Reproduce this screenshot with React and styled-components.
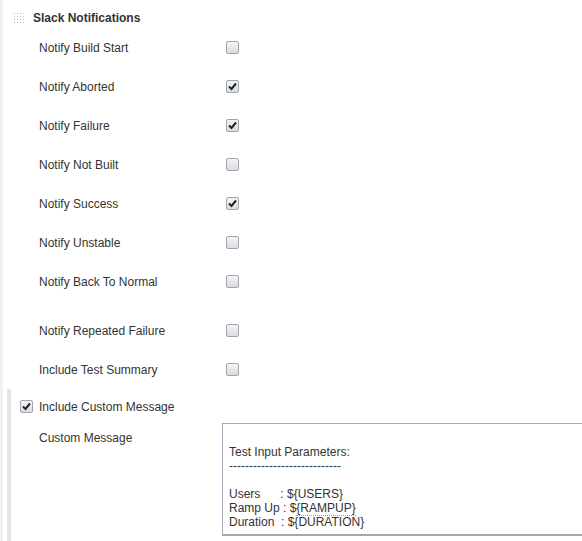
import React from 'react';
import styled, { createGlobalStyle } from 'styled-components';

const GlobalStyle = createGlobalStyle`
  html, body {
    margin: 0;
    padding: 0;
    background: #ffffff;
  }
  body {
    font-family: "Liberation Sans", Arial, sans-serif;
    font-size: 12px;
    color: #333333;
  }
`;

const Page = styled.div`
  width: 582px;
  height: 541px;
  overflow: hidden;
  display: flex;
  border-left: 3px solid #f1f2f4;
  box-sizing: border-box;
`;

const Section = styled.div`
  flex: 1;
  display: flex;
  flex-direction: column;
  padding-top: 9px;
`;

const Header = styled.div`
  display: flex;
  align-items: center;
  gap: 9px;
  padding-left: 11px;
  height: 17px;
  margin-bottom: 2px;
  font-weight: bold;
  color: #333;
`;

const Grip = styled.div`
  width: 10px;
  height: 10px;
  display: grid;
  grid-template-columns: repeat(4, 1px);
  grid-auto-rows: 1px;
  gap: 2px 2px;
  padding-top: 1px;
  span { background: #b4b8c0; }
`;

const Row = styled.div`
  display: flex;
  align-items: center;
  height: 39px;
  margin-top: ${p => p.$top || 0}px;
  padding-left: 36px;
`;

const Label = styled.div`
  width: 187px;
  color: #333;
`;

const Box = styled.span`
  width: 11px;
  height: 11px;
  border: 1px solid #9ea4b0;
  border-radius: 2px;
  background: linear-gradient(#f4f4f4, #dcdcdc);
  display: inline-flex;
  align-items: center;
  justify-content: center;
  flex: none;
`;

const Nested = styled.div`
  display: flex;
  flex-direction: column;
  flex: 1;
  margin-left: 4px;
  border-left: 4px solid #e4e5e7;
  padding-left: 9px;
`;

const ToggleRow = styled.div`
  display: flex;
  align-items: center;
  gap: 6px;
  height: 35px;
`;

const FieldRow = styled.div`
  display: flex;
  align-items: flex-start;
  padding-left: 19px;
  margin-top: 7px;
`;

const FieldLabel = styled.div`
  width: 183px;
`;

const TextArea = styled.div`
  flex: 1;
  height: 113px;
  border: 1px solid #a3a9b6;
  border-right: none;
  border-bottom: 2px solid #a3a9b6;
  padding: 7px 0 0 6px;
  font-size: 12px;
  line-height: 14px;
  color: #333;
  box-sizing: border-box;
  margin-top: -8px;
`;

const Line = styled.div`
  white-space: pre;
  height: 14px;
`;

const Spell = styled.span`
  border-bottom: 1px dotted #8f9bc4;
`;

const Check = () => (
  <svg width="9" height="9" viewBox="0 0 9 9">
    <path d="M1 4.5 L3.5 7 L8 1.5" fill="none" stroke="#222" strokeWidth="2" />
  </svg>
);

const CheckBox = ({ checked }) => <Box>{checked && <Check />}</Box>;

const options = [
  { label: 'Notify Build Start', checked: false },
  { label: 'Notify Aborted', checked: true },
  { label: 'Notify Failure', checked: true },
  { label: 'Notify Not Built', checked: false },
  { label: 'Notify Success', checked: true },
  { label: 'Notify Unstable', checked: false },
  { label: 'Notify Back To Normal', checked: false },
  { label: 'Notify Repeated Failure', checked: false, top: 10 },
  { label: 'Include Test Summary', checked: false },
];

export default function App() {
  return (
    <>
      <GlobalStyle />
      <Page>
        <Section>
          <Header>
            <Grip>
              {Array.from({ length: 16 }).map((_, i) => <span key={i} />)}
            </Grip>
            Slack Notifications
          </Header>
          {options.map(o => (
            <Row key={o.label} $top={o.top}>
              <Label>{o.label}</Label>
              <CheckBox checked={o.checked} />
            </Row>
          ))}
          <Nested>
            <ToggleRow>
              <CheckBox checked />
              Include Custom Message
            </ToggleRow>
            <FieldRow>
              <FieldLabel>Custom Message</FieldLabel>
              <TextArea>
                <Line />
                <Line>Test Input Parameters:</Line>
                <Line>----------------------------</Line>
                <Line />
                <Line>{'Users      : ${USERS}'}</Line>
                <Line>{'Ramp Up : $'}<Spell>{'{RAMPUP}'}</Spell></Line>
                <Line>{'Duration  : ${DURATION}'}</Line>
              </TextArea>
            </FieldRow>
          </Nested>
        </Section>
      </Page>
    </>
  );
}
